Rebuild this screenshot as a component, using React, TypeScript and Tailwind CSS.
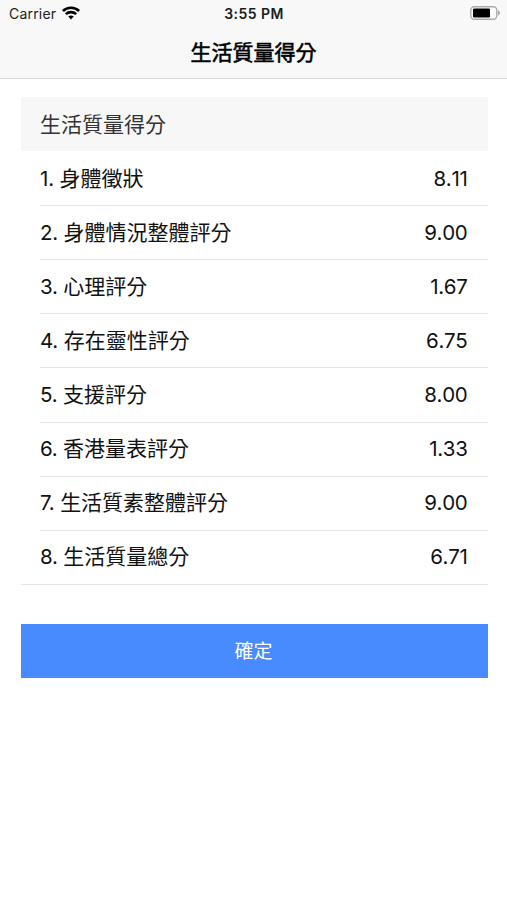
const rows: [string, string, string][] = [
  ['1.', '身體徵狀', '8.11'],
  ['2.', '身體情況整體評分', '9.00'],
  ['3.', '心理評分', '1.67'],
  ['4.', '存在靈性評分', '6.75'],
  ['5.', '支援評分', '8.00'],
  ['6.', '香港量表評分', '1.33'],
  ['7.', '生活質素整體評分', '9.00'],
  ['8.', '生活質量總分', '6.71'],
];

export default function App() {
  return (
    <div className="h-[900px] w-[507px] overflow-hidden bg-white font-['Inter','Noto_Sans_CJK_TC',sans-serif] text-black">
      <header className="h-[79px] border-b border-[#d8d8d8] bg-[#f8f8f8]">
        <div className="grid h-[27px] grid-cols-3 items-center pr-[7px] pl-[9px] text-[14px]">
          <div className="flex items-center gap-[6px]">
            <span className="w-[47px] tracking-[0.2px] text-[#222]">Carrier</span>
            <svg className="-mt-[2px]" width="18" height="14" viewBox="0 0 18 14" fill="none" stroke="#000" strokeWidth="2.6">
              <path d="M.9 5C5.3.6 12.7.6 17.1 5" />
              <path d="M3.8 8.1c2.9-2.7 7.5-2.7 10.4 0" />
              <path d="M6.2 10.6c1.6-1.5 4-1.5 5.6 0L9 13.5z" fill="#000" stroke="none" />
            </svg>
          </div>
          <span className="-ml-px text-center font-semibold tracking-[0.45px] text-[#1c1c1c]">3:55 PM</span>
          <svg className="-mt-px justify-self-end" width="30" height="14" viewBox="0 0 30 14">
            <rect x=".8" y=".8" width="26" height="12.4" rx="3.5" fill="#fff" stroke="#aaa" strokeWidth="1.4" />
            <rect x="3" y="2.5" width="17" height="9" rx="1.3" />
            <path d="M28 4.3c2.6 1.4 2.6 4 0 5.4z" fill="#aaa" />
          </svg>
        </div>
        <h1 className="pt-px text-center text-[21px] leading-[50px] font-normal [-webkit-text-stroke:0.6px_#000]">生活質量得分</h1>
      </header>
      <main className="pt-[18px] pr-[19.5px] pl-[20.5px]">
        <h2 className="h-[54px] bg-[#f7f7f7] pt-px pl-[19.5px] text-[21px] leading-[54px] text-[#333]">生活質量得分</h2>
        <ul className="border-b border-[#e6e6e6]">
          {rows.map(([n, label, score], i) => (
            <li key={n} className="pl-[19.5px]">
              <div className={`flex h-[54.12px] items-center justify-between pr-5 text-[21px] text-[#111] ${i > 0 ? 'border-t border-[#e6e6e6]' : 'pt-px'}`}>
                <span><span className="text-[20.5px] tracking-[-0.2px]">{n} </span>{label}</span>
                <span className="pt-px text-[20.5px] tracking-[-0.3px] [font-kerning:none]">{score}</span>
              </div>
            </li>
          ))}
        </ul>
        <button className="mt-[39px] h-[54px] w-full bg-[#488aff] pt-[2px] pr-px text-[19px] text-white">確定</button>
      </main>
    </div>
  );
}
